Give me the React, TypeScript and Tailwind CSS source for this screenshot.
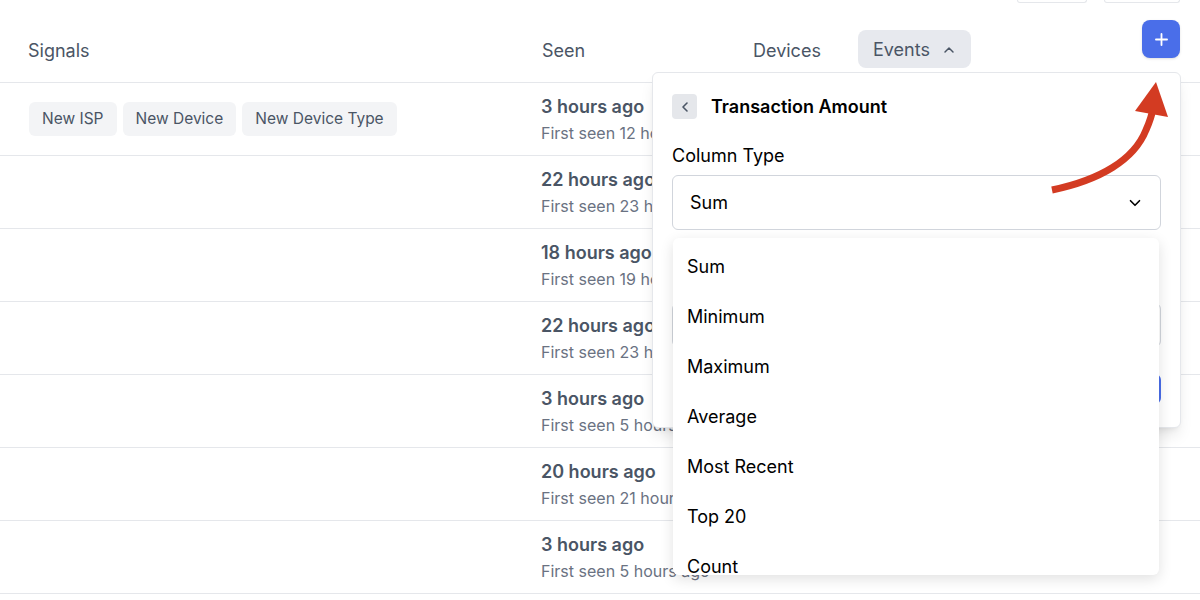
import { ChevronDown, ChevronLeft, ChevronUp, Plus } from "lucide-react";

const rows = [
  { seen: "3 hours ago", first: "First seen 12 hours ago", signals: ["New ISP", "New Device", "New Device Type"] },
  { seen: "22 hours ago", first: "First seen 23 hours ago", signals: [] },
  { seen: "18 hours ago", first: "First seen 19 hours ago", signals: [] },
  { seen: "22 hours ago", first: "First seen 23 hours ago", signals: [] },
  { seen: "3 hours ago", first: "First seen 5 hours ago", signals: [] },
  { seen: "20 hours ago", first: "First seen 21 hours ago", signals: [] },
  { seen: "3 hours ago", first: "First seen 5 hours ago", signals: [] },
];

const options = ["Sum", "Minimum", "Maximum", "Average", "Most Recent", "Top 20", "Count"];

function Row({ seen, first, signals }: { seen: string; first: string; signals: string[] }) {
  return (
    <div className="flex h-[73px] items-center border-b border-gray-200">
      <div className="flex w-[541px] gap-[6px] pl-[29px]">
        {signals.map((s) => (
          <span key={s} className="rounded-md bg-gray-100 px-[13px] py-[6px] text-[15.5px] leading-[22px] text-gray-600">
            {s}
          </span>
        ))}
      </div>
      <div className="flex flex-col">
        <span className="text-[18px] font-semibold leading-[26px] text-gray-600">{seen}</span>
        <span className="mt-[1px] text-[16px] leading-[24px] text-gray-500">{first}</span>
      </div>
    </div>
  );
}

export default function App() {
  return (
    <div
      className="relative h-[600px] w-[1200px] overflow-hidden bg-white"
      style={{ fontFamily: "Inter, 'Noto Sans', sans-serif" }}
    >
      {/* toolbar above, scrolled mostly out of view */}
      <div className="flex h-[3px] justify-end gap-[17px] pr-[20px]">
        <div className="w-[70px] rounded-b-md border-x border-b border-gray-200" />
        <div className="w-[76px] rounded-b-md border-x border-b border-gray-200" />
      </div>

      {/* header */}
      <div className="flex h-[80px] items-start border-b border-gray-200 text-[18px] leading-[28px] text-gray-600">
        <div className="mt-[34px] w-[542px] pl-[28px]">Signals</div>
        <div className="mt-[34px] w-[211px]">Seen</div>
        <div className="mt-[34px] w-[105px]">Devices</div>
        <div className="flex flex-1 items-start justify-between pr-[20px]">
          <div className="mt-[27px] flex h-[38px] items-center gap-[11px] rounded-lg bg-[#e7e9ee] pl-[15px] pr-[14px] pt-[1px]">
            Events
            <ChevronUp size={16} strokeWidth={2.2} />
          </div>
          <button className="mt-[17px] flex h-[38px] w-[38px] items-center justify-center rounded-lg bg-[#4a6ee9] text-white shadow-sm">
            <Plus size={19} strokeWidth={2.3} />
          </button>
        </div>
      </div>

      {rows.map((r, i) => (
        <Row key={i} {...r} />
      ))}

      {/* column popover */}
      <div className="absolute left-[652px] top-[72px] h-[356px] w-[529px] rounded-md border border-gray-200 bg-white px-[19px] pt-[20px] shadow-lg">
        <div className="flex items-center gap-[14px]">
          <div className="flex h-[25px] w-[25px] items-center justify-center rounded bg-gray-200 text-gray-600">
            <ChevronLeft size={16} strokeWidth={2.4} />
          </div>
          <span className="text-[18px] font-semibold text-black">Transaction Amount</span>
        </div>
        <div className="mt-[22px] text-[18px] leading-[27px] text-black">Column Type</div>
        <div className="mt-[6px] flex h-[55px] items-center justify-between rounded-md border border-gray-300 pl-[17px] pr-[16px] text-[18px] text-black">
          Sum
          <ChevronDown size={18} strokeWidth={2.2} />
        </div>
        <div className="mt-[73px] h-[44px] rounded-md border border-gray-300" />
        <div className="mt-[27px] flex justify-end">
          <div className="h-[30px] w-[90px] rounded-md bg-[#4a6ee9]" />
        </div>
      </div>

      {/* select options */}
      <div className="absolute left-[673px] top-[238px] h-[337px] w-[486px] overflow-hidden rounded-md bg-white pt-[3px] shadow-[0_4px_14px_rgba(0,0,0,0.12)]">
        {options.map((o) => (
          <div key={o} className="flex h-[50px] items-center pl-[14px] text-[18px] text-black">
            {o}
          </div>
        ))}
      </div>

      {/* annotation arrow */}
      <svg className="absolute left-0 top-0" width="1200" height="600" viewBox="0 0 1200 600">
        <path d="M1052 190 C1100 180 1134 160 1146 130 C1150 121 1152 115 1153 108" fill="none" stroke="#d33b22" strokeWidth="7" />
        <polygon points="1135,111 1156,82 1168,117" fill="#d33b22" />
      </svg>
    </div>
  );
}
